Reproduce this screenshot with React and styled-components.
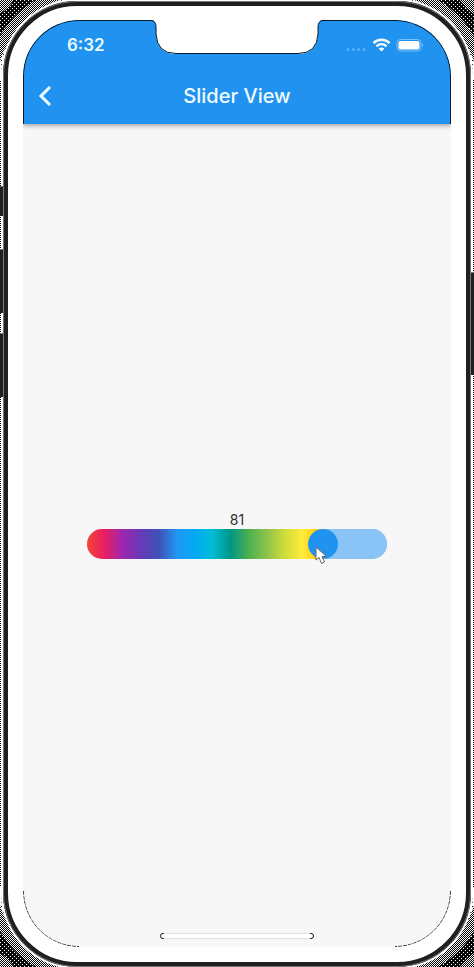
import React, { useState } from "react";
import styled, { createGlobalStyle } from "styled-components";

const GlobalStyle = createGlobalStyle`
  * { box-sizing: border-box; }
  body { margin: 0; background: #fff; font-family: Inter, "Liberation Sans", sans-serif; }
`;

const Page = styled.div`
  position: relative;
  min-height: 100vh;
  padding: 1px 3px 0;
  display: flex;
  overflow: hidden;
  background: repeating-conic-gradient(#000 0 25%, #fff 0 50%) 0 0 / 2px 2px;
`;

const CornerShade = styled.svg`
  position: absolute;
  width: 80px;
  height: 80px;
  ${(p) => p.$v}: 0;
  ${(p) => p.$h}: 0;
  transform: scale(${(p) => (p.$h === "right" ? -1 : 1)}, ${(p) => (p.$v === "bottom" ? -1 : 1)});
`;

const SideButton = styled.span`
  position: absolute;
  z-index: 1;
  ${(p) => p.$side}: 0;
  top: ${(p) => p.$top}px;
  width: 3px;
  height: ${(p) => p.$height}px;
  background: #202020;
  border-top: 1px solid #777;
`;

const Phone = styled.div`
  position: relative;
  flex: 1;
  display: flex;
  padding: 14px 15px 15px;
  background: #fff;
  border: 5px solid #202020;
  border-radius: 74px;
  box-shadow: 0 0 0 2px #fff;
  &::after {
    content: "";
    position: absolute;
    inset: -5px;
    border: 1px solid #777;
    border-radius: 74px;
    pointer-events: none;
  }
`;

const Screen = styled.main`
  position: relative;
  flex: 1;
  display: flex;
  flex-direction: column;
  overflow: hidden;
  border-radius: 56px;
  background: repeating-conic-gradient(#f3f3f3 0 25%, #fbfbfb 0 50%) 0 0 / 2px 2px;
`;

const BottomEdge = styled.svg`
  position: absolute;
  bottom: 0;
  ${(p) => p.$h}: 0;
  width: 60px;
  height: 60px;
  transform: scaleX(${(p) => (p.$h === "right" ? -1 : 1)});
`;

const Header = styled.header`
  position: relative;
  background: repeating-conic-gradient(#1f8fed 0 25%, #2296f2 0 50%) 0 0 / 2px 2px;
  color: #fff;
  border-radius: 56px 56px 0 0;
  box-shadow: 0 2px 4px rgba(0, 0, 0, 0.32);
  &::after {
    content: "";
    position: absolute;
    inset: 0;
    border: 1px solid #061a2b;
    border-bottom: 0;
    border-radius: 56px 56px 0 0;
    pointer-events: none;
  }
`;

const Notch = styled.svg`
  position: absolute;
  z-index: 1;
  top: 0;
  left: 50%;
  width: 172px;
  height: 36px;
  transform: translateX(-50%);
`;

const StatusBar = styled.div`
  height: 48px;
  padding: 2px 28px 0 44px;
  display: flex;
  align-items: center;
  justify-content: space-between;
`;

const Time = styled.time`
  font-size: 17px;
  line-height: 20px;
  font-weight: 600;
  color: #e6f8ff;
`;

const StatusIcons = styled.svg`
  width: 78px;
  height: 16px;
`;

const NavBar = styled.div`
  height: 56px;
  padding: 0 6px;
  display: grid;
  grid-template-columns: 32px 1fr 32px;
  align-items: center;
`;

const BackButton = styled.button`
  height: 32px;
  padding: 0;
  border: 0;
  background: none;
  color: #f0fbff;
  display: flex;
  align-items: center;
  justify-content: center;
  cursor: pointer;
`;

const Title = styled.h1`
  margin: 0;
  text-align: center;
  font-size: 20px;
  line-height: 24px;
  font-weight: 500;
  color: #f0fbff;
`;

const Content = styled.section`
  flex: 1;
  display: flex;
  flex-direction: column;
  align-items: center;
  justify-content: center;
  padding: 0 24px 2px;
`;

const ValueLabel = styled.label`
  font-size: 14px;
  line-height: 18px;
  color: #303030;
`;

const SliderBox = styled.div`
  position: relative;
  width: 100%;
  max-width: 300px;
  height: 30px;
`;

const Range = styled.input`
  appearance: none;
  display: block;
  width: 100%;
  height: 30px;
  margin: 0;
  border-radius: 15px;
  outline: none;
  cursor: default;
  background-color: #8ac4f6;
  background-repeat: no-repeat;
  background-image: linear-gradient(90deg, #f44336, #e91e63, #9c27b0, #673ab7, #3f51b5, #2196f3, #03a9f4, #00bcd4, #009688, #4caf50, #8bc34a, #cddc39, #ffeb3b, #ffc107, #ff9800);
  &::-webkit-slider-thumb {
    appearance: none;
    width: 30px;
    height: 30px;
    border: 0;
    border-radius: 50%;
    background: #2093f0;
  }
`;

/* Covers the palette past the thumb's centre. */
const Rest = styled.span`
  position: absolute;
  top: 0;
  right: 0;
  height: 30px;
  border-radius: 0 15px 15px 0;
  background: #8ac4f6;
  pointer-events: none;
`;

const ThumbEdge = styled.span`
  position: absolute;
  top: 0;
  width: 15px;
  height: 30px;
  border-radius: 0 15px 15px 0;
  background: #2093f0;
  pointer-events: none;
`;

const Pointer = styled.svg`
  position: absolute;
  top: 17px;
  width: 13px;
  height: 19px;
  pointer-events: none;
`;

const HomeIndicator = styled.svg`
  position: absolute;
  bottom: 8px;
  left: 50%;
  width: 154px;
  height: 6px;
  transform: translateX(-50%);
`;

const corners = [["top", "left"], ["top", "right"], ["bottom", "left"], ["bottom", "right"]];

export default function App() {
  const [value, setValue] = useState(81.9);
  const at = (offset) => `calc((100% - 30px) * ${value / 100} + ${offset}px)`;
  return (
    <>
      <GlobalStyle />
      <Page>
        {corners.map(([v, h]) => (
          <CornerShade key={v + h} $v={v} $h={h} viewBox="0 0 80 80" aria-hidden="true">
            <defs>
              <pattern id={`dark-${v}-${h}`} width="4" height="4" patternUnits="userSpaceOnUse" shapeRendering="crispEdges">
                <path d="M0 0h4v4H0z" fill="#060606" />
                <path d="M0 0h1v1H0zM2 2h1v1H2z" fill="#fff" />
              </pattern>
              <pattern id={`light-${v}-${h}`} width="4" height="4" patternUnits="userSpaceOnUse" shapeRendering="crispEdges">
                <path d="M0 0h4v4H0z" fill="#fff" />
                <path d="M1 0h1v1H1zM3 2h1v1H3z" fill="#111" />
              </pattern>
            </defs>
            <path d="M0 36V14L8 8L14 0H36C22 8 9 20 0 36Z" fill={`url(#dark-${v}-${h})`} />
            <path d="M0 80V62C7 36 33 8 60 0H80V5C38 3 8 36 3 80Z" fill={`url(#light-${v}-${h})`} />
          </CornerShade>
        ))}
        <SideButton $side="left" $top={186} $height={30} />
        <SideButton $side="left" $top={249} $height={64} />
        <SideButton $side="left" $top={333} $height={64} />
        <SideButton $side="right" $top={272} $height={103} />
        <Phone>
          <Screen>
            <Header>
              <Notch viewBox="0 0 172 36" aria-hidden="true">
                <path d="M0 0Q5 0 5 7V14Q6 34 25 34H147Q166 34 167 14V7Q167 0 172 0Z" fill="#fff" />
                <path d="M0 .5Q5 1 5 7V14Q6 33.5 25 33.5H147Q166 33.5 167 14V7Q167 1 172 .5" fill="none" stroke="#061a2b" />
              </Notch>
              <StatusBar>
                <Time>6:32</Time>
                <StatusIcons viewBox="0 0 78 16" aria-hidden="true">
                  <g fill="#55aff5">
                    <circle cx="3" cy="12.5" r="1.6" />
                    <circle cx="8.3" cy="12.5" r="1.6" />
                    <circle cx="13.6" cy="12.5" r="1.6" />
                    <circle cx="19" cy="12.5" r="1.6" />
                  </g>
                  <g fill="none" stroke="#f0fbff" strokeWidth="2.5">
                    <path d="M28.5 6.2C32.8 1.7 40.2 1.7 44.5 6.2" />
                    <path d="M31.5 9.4C34.4 6.6 38.6 6.6 41.5 9.4" />
                  </g>
                  <path d="M33.6 11.6Q36.5 9.6 39.4 11.6L36.5 14.4Z" fill="#f0fbff" />
                  <rect x="52" y="2.5" width="24" height="11.5" rx="3.5" fill="none" stroke="#79c1f8" />
                  <rect x="53.5" y="4" width="21" height="8.5" rx="2" fill="#fff" />
                  <path d="M77 6Q79 8 77 10Z" fill="#79c1f8" />
                </StatusIcons>
              </StatusBar>
              <NavBar>
                <BackButton type="button" aria-label="Back">
                  <svg width="14" height="22" viewBox="0 0 14 22" fill="none" stroke="currentColor" strokeWidth="3" aria-hidden="true">
                    <path d="M12 2L3 11L12 20" />
                  </svg>
                </BackButton>
                <Title>Slider View</Title>
              </NavBar>
            </Header>
            <Content>
              <ValueLabel htmlFor="level">{Math.floor(value)}</ValueLabel>
              <SliderBox>
                <Range
                  id="level"
                  type="range"
                  min="0"
                  max="100"
                  step="0.1"
                  value={value}
                  onChange={(e) => setValue(Number(e.target.value))}
                  style={{ backgroundSize: `${at(30)} 100%` }}
                />
                <Rest style={{ left: at(15) }} />
                <ThumbEdge style={{ left: at(15) }} />
                <Pointer style={{ left: at(7) }} viewBox="0 0 13 19" aria-hidden="true">
                  <path d="M1 1V14L4 11.5L6.5 17.5L9.5 16L7 10.5H11.5Z" fill="#fff" stroke="#666" />
                </Pointer>
              </SliderBox>
            </Content>
            {["left", "right"].map((h) => (
              <BottomEdge key={h} $h={h} viewBox="0 0 60 60" aria-hidden="true">
                <defs>
                  <linearGradient id={`edge-${h}`} x1="0" y1="0" x2="60" y2="60" gradientUnits="userSpaceOnUse">
                    <stop offset="0.2" stopColor="#333" />
                    <stop offset="1" stopColor="#333" />
                  </linearGradient>
                </defs>
                <path d="M.5 4A55.5 55.5 0 0 0 56 59.5" fill="none" stroke={`url(#edge-${h})`} strokeDasharray="4 1" />
              </BottomEdge>
            ))}
            <HomeIndicator viewBox="0 0 154 6" aria-hidden="true">
              <rect x=".5" y=".5" width="153" height="5" rx="2.5" fill="#fff" stroke="#e2e2e2" />
              <path d="M4 .5H3Q.5 .5 .5 3T3 5.5H4M150 .5H151Q153.5 .5 153.5 3T151 5.5H150" fill="none" stroke="#222" />
            </HomeIndicator>
          </Screen>
        </Phone>
      </Page>
    </>
  );
}
